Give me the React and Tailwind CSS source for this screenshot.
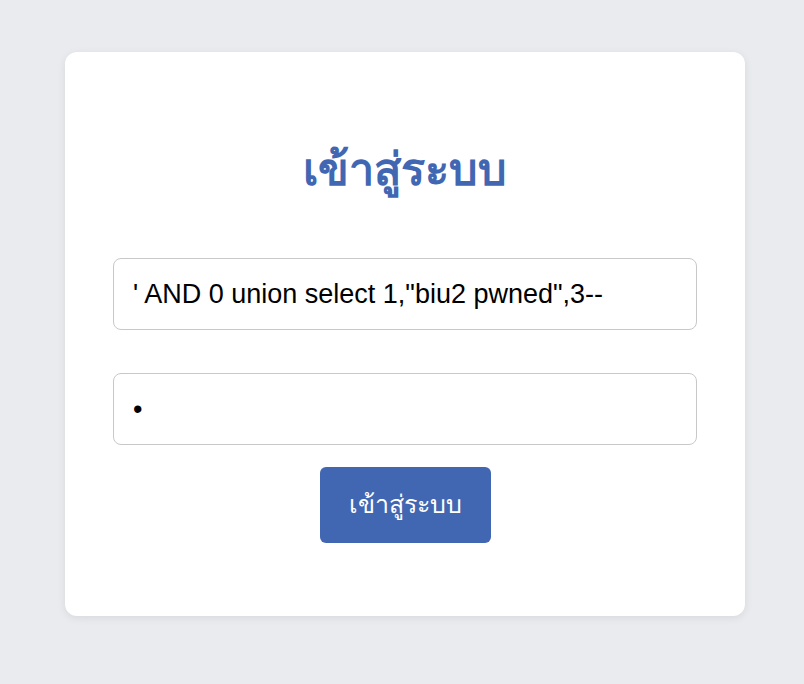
export default function App() {
  return (
    <div className="min-h-screen w-full bg-[#e9ebee] flex justify-start pl-[65px] pt-[52px] font-['Liberation_Sans',Arial,sans-serif]">
      <div className="w-[680px] h-[564px] bg-white rounded-[12px] shadow-[0_2px_8px_rgba(0,0,0,0.08)] px-[48px] flex flex-col items-center">
        <h1 className="mt-[88px] h-[60px] leading-[60px] text-[45px] font-bold text-[#4267b2]">
          เข้าสู่ระบบ
        </h1>
        <input
          type="text"
          defaultValue={`' AND 0 union select 1,"biu2 pwned",3--`}
          className="mt-[58px] w-full h-[72px] px-[19px] text-[27px] text-black border border-[#c8c8c8] rounded-[8px] outline-none"
        />
        <input
          type="password"
          defaultValue="a"
          className="mt-[43px] w-full h-[72px] px-[19px] text-[27px] text-black border border-[#c8c8c8] rounded-[8px] outline-none"
        />
        <button className="mt-[22px] w-[171px] h-[76px] bg-[#4267b2] text-white text-[25px] rounded-[6px]">
          เข้าสู่ระบบ
        </button>
      </div>
    </div>
  )
}
